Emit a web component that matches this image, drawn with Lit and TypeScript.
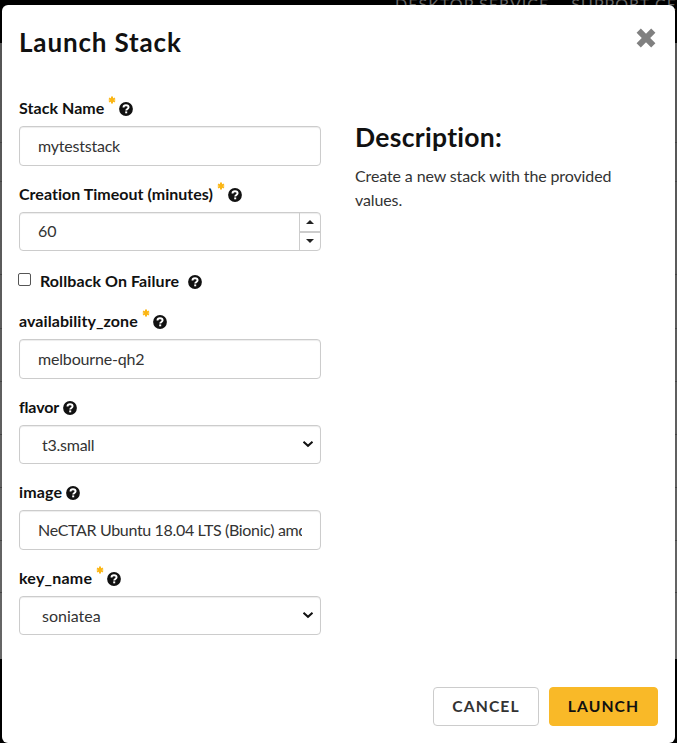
import { LitElement, html, css, svg, nothing } from "lit";
import { customElement, property } from "lit/decorators.js";

interface Field {
  label: string;
  value: string;
  kind: "text" | "number" | "select" | "checkbox";
  required?: boolean;
  track: number;
  valueTrack?: number;
}

const FIELDS: Field[] = [
  { label: "Stack Name", value: "myteststack", kind: "text", required: true, track: 0.06, valueTrack: -0.22 },
  { label: "Creation Timeout (minutes)", value: "60", kind: "number", required: true, track: 0.02 },
  { label: "Rollback On Failure", value: "", kind: "checkbox", track: 0.09 },
  { label: "availability_zone", value: "melbourne-qh2", kind: "text", required: true, track: 0.08, valueTrack: -0.17 },
  { label: "flavor", value: "t3.small", kind: "select", track: -0.17, valueTrack: -0.25 },
  { label: "image", value: "NeCTAR Ubuntu 18.04 LTS (Bionic) amd64", kind: "text", track: 0.17, valueTrack: -0.34 },
  { label: "key_name", value: "soniatea", kind: "select", required: true, track: 0.22 },
];

const star = html`<svg class="star" viewBox="0 0 8 8" width="8" height="8">
  ${svg`<path d="M4 .5V7.500M1 2.300 7 5.700M7 2.300 1 5.700" stroke="#fbb615" stroke-width="2" fill="none"/>`}
</svg>`;

const help = html`<svg class="help" viewBox="0 0 14 14" width="14" height="14">
  ${svg`<circle cx="7" cy="7" r="6.900" fill="#111"/>
  <path d="M4.500 5.500C4.500 3.900 5.500 3.200 7 3.200c1.600 0 2.600.8 2.600 2.100C9.600 6.900 7.300 6.900 7.200 8.500" stroke="#fff" stroke-width="1.900" fill="none"/>
  <path d="M6.200 9.400h2v1.900h-2z" fill="#fff"/>`}
</svg>`;

@customElement("stack-field")
class StackField extends LitElement {
  @property({ attribute: false }) field!: Field;

  static styles = css`
    :host { display: block; color: #333; }
    .label { display: flex; align-items: center; box-sizing: border-box; height: 24px; padding-bottom: 1px; font-weight: 700; font-size: 16px; color: #111; white-space: nowrap; }
    svg { flex: none; }
    .name { line-height: 21px; padding-bottom: 2px; }
    .star { align-self: flex-start; margin: -1px 3px 0 4px; }
    .help { margin-left: 4px; }
    .star + .help { margin-left: 0; }
    .check { width: 11px; height: 11px; box-sizing: content-box; border: 1px solid #555; border-radius: 2px; margin: 0 9px 4px -1px; }
    .checkbox .help { margin-left: 9px; }
    .box { box-sizing: border-box; display: flex; align-items: center; height: 40px; margin-top: 5px; border: 1px solid #ccc; border-radius: 4px; background: #fff; box-shadow: inset 0 1px 1px rgba(0, 0, 0, 0.075); padding: 0 18px; font-size: 16px; overflow: hidden; }
    .value { flex: 1; overflow: hidden; white-space: nowrap; line-height: 24px; }
    .number, .select { height: 39px; }
    .number { padding-right: 0; }
    .number .value { padding-bottom: 1px; }
    .select { padding: 1px 6px 0 22px; }
    .chevron { margin-top: -3px; }
    .spin { display: grid; grid-template-rows: 1fr 1fr; width: 20px; align-self: stretch; border-left: 1px solid #ccc; }
    .step { display: flex; align-items: center; justify-content: center; }
    .step:first-child { border-bottom: 1px solid #ccc; }
    .step + .step { border-top: 1px solid #ccc; }
  `;

  render() {
    const f = this.field;
    const box = f.kind !== "checkbox";
    return html`
      <div class="label ${f.kind === "checkbox" ? "checkbox" : ""}">
        ${box ? nothing : html`<span class="check"></span>`}
        <span class="name" style="letter-spacing:${f.track}px">${f.label}</span>
        ${f.required ? star : nothing}${help}
      </div>
      ${box
        ? html`<div class="box ${f.kind}">
            <span class="value" style="letter-spacing:${f.valueTrack ?? 0}px">${f.value}</span>
            ${f.kind === "select"
              ? html`<svg class="chevron" width="12" height="8" viewBox="0 0 12 8"><path d="M1.500 1.700 6 5.800l4.500-4.100" fill="none" stroke="#111" stroke-width="2"/></svg>`
              : nothing}
            ${f.kind === "number"
              ? html`<div class="spin">
                  <span class="step"><svg width="8" height="4"><path d="M0 4 4 0l4 4z" fill="#222"/></svg></span>
                  <span class="step"><svg width="8" height="4"><path d="M0 0l4 4 4-4z" fill="#222"/></svg></span>
                </div>`
              : nothing}
          </div>`
        : nothing}
    `;
  }
}

@customElement("app-root")
export class AppRoot extends LitElement {
  static styles = css`
    :host { display: block; position: relative; box-sizing: border-box; width: 677px; height: 743px; padding: 5px 2px 0; overflow: hidden; font-family: Lato, "Liberation Sans", sans-serif; font-variant-ligatures: none; background: #000; }
    .page { position: absolute; top: 43px; left: 0; right: 0; height: 616px; background: linear-gradient(#555, #666); }
    .rule { position: absolute; left: 0; right: 0; height: 1px; background: #444; }
    .nav { position: absolute; top: -6px; left: 395px; display: flex; gap: 22px; white-space: nowrap; font-size: 16px; line-height: 20px; letter-spacing: 1.050px; color: #666; }
    .modal { position: relative; box-sizing: border-box; height: 738px; background: #fff; border-radius: 6px; padding: 0 17px; display: flex; flex-direction: column; }
    .header { display: flex; justify-content: space-between; height: 92px; }
    h3, h4 { margin: 0; font-weight: 700; color: #111; }
    h3 { font-size: 26px; line-height: 32px; padding-top: 21px; letter-spacing: 0.850px; }
    .close { margin: 22px 1px 0 0; }
    .body { display: grid; grid-template-columns: 302px 302px; gap: 34px; flex: 1; }
    .form { display: flex; flex-direction: column; gap: 17px; }
    .field-checkbox { margin-top: 2px; margin-bottom: -1px; }
    h4 { font-size: 26.500px; line-height: 32px; padding-top: 24px; letter-spacing: 0.300px; }
    p { margin: 11px 0 0; font-size: 16px; line-height: 24px; letter-spacing: -0.120px; color: #333; }
    .footer { display: flex; justify-content: flex-end; gap: 10px; padding-bottom: 17px; }
    .btn { box-sizing: border-box; height: 39px; border: 1px solid #ccc; border-radius: 4px; background: #fff; padding: 0 0 1px; font: 700 15.700px/36px Lato, sans-serif; letter-spacing: 1.100px; color: #333; width: 106px; }
    .primary { width: 109px; background: #f9b928; border-color: #f9b928; color: #111; }
  `;

  render() {
    return html`
      <div class="page">
        ${[99, 138, 231, 285, 338, 391, 444, 497, 549].map((y) => html`<div class="rule" style="top:${y}px"></div>`)}
      </div>
      <div class="nav"><span>DESKTOP SERVICE</span><span>SUPPORT CENTRE</span></div>
      <div class="modal">
        <div class="header">
          <h3>Launch Stack</h3>
          <svg class="close" width="22" height="22" viewBox="0 0 22 22"><path d="M3.700 3.700 18.300 18.300M18.300 3.700 3.700 18.300" stroke="#808080" stroke-width="6" fill="none"/></svg>
        </div>
        <div class="body">
          <div class="form">
            ${FIELDS.map((f) => html`<stack-field class="field-${f.kind}" .field=${f}></stack-field>`)}
          </div>
          <div>
            <h4>Description:</h4>
            <p>Create a new stack with the provided values.</p>
          </div>
        </div>
        <div class="footer">
          <button class="btn">CANCEL</button>
          <button class="btn primary">LAUNCH</button>
        </div>
      </div>
    `;
  }
}
